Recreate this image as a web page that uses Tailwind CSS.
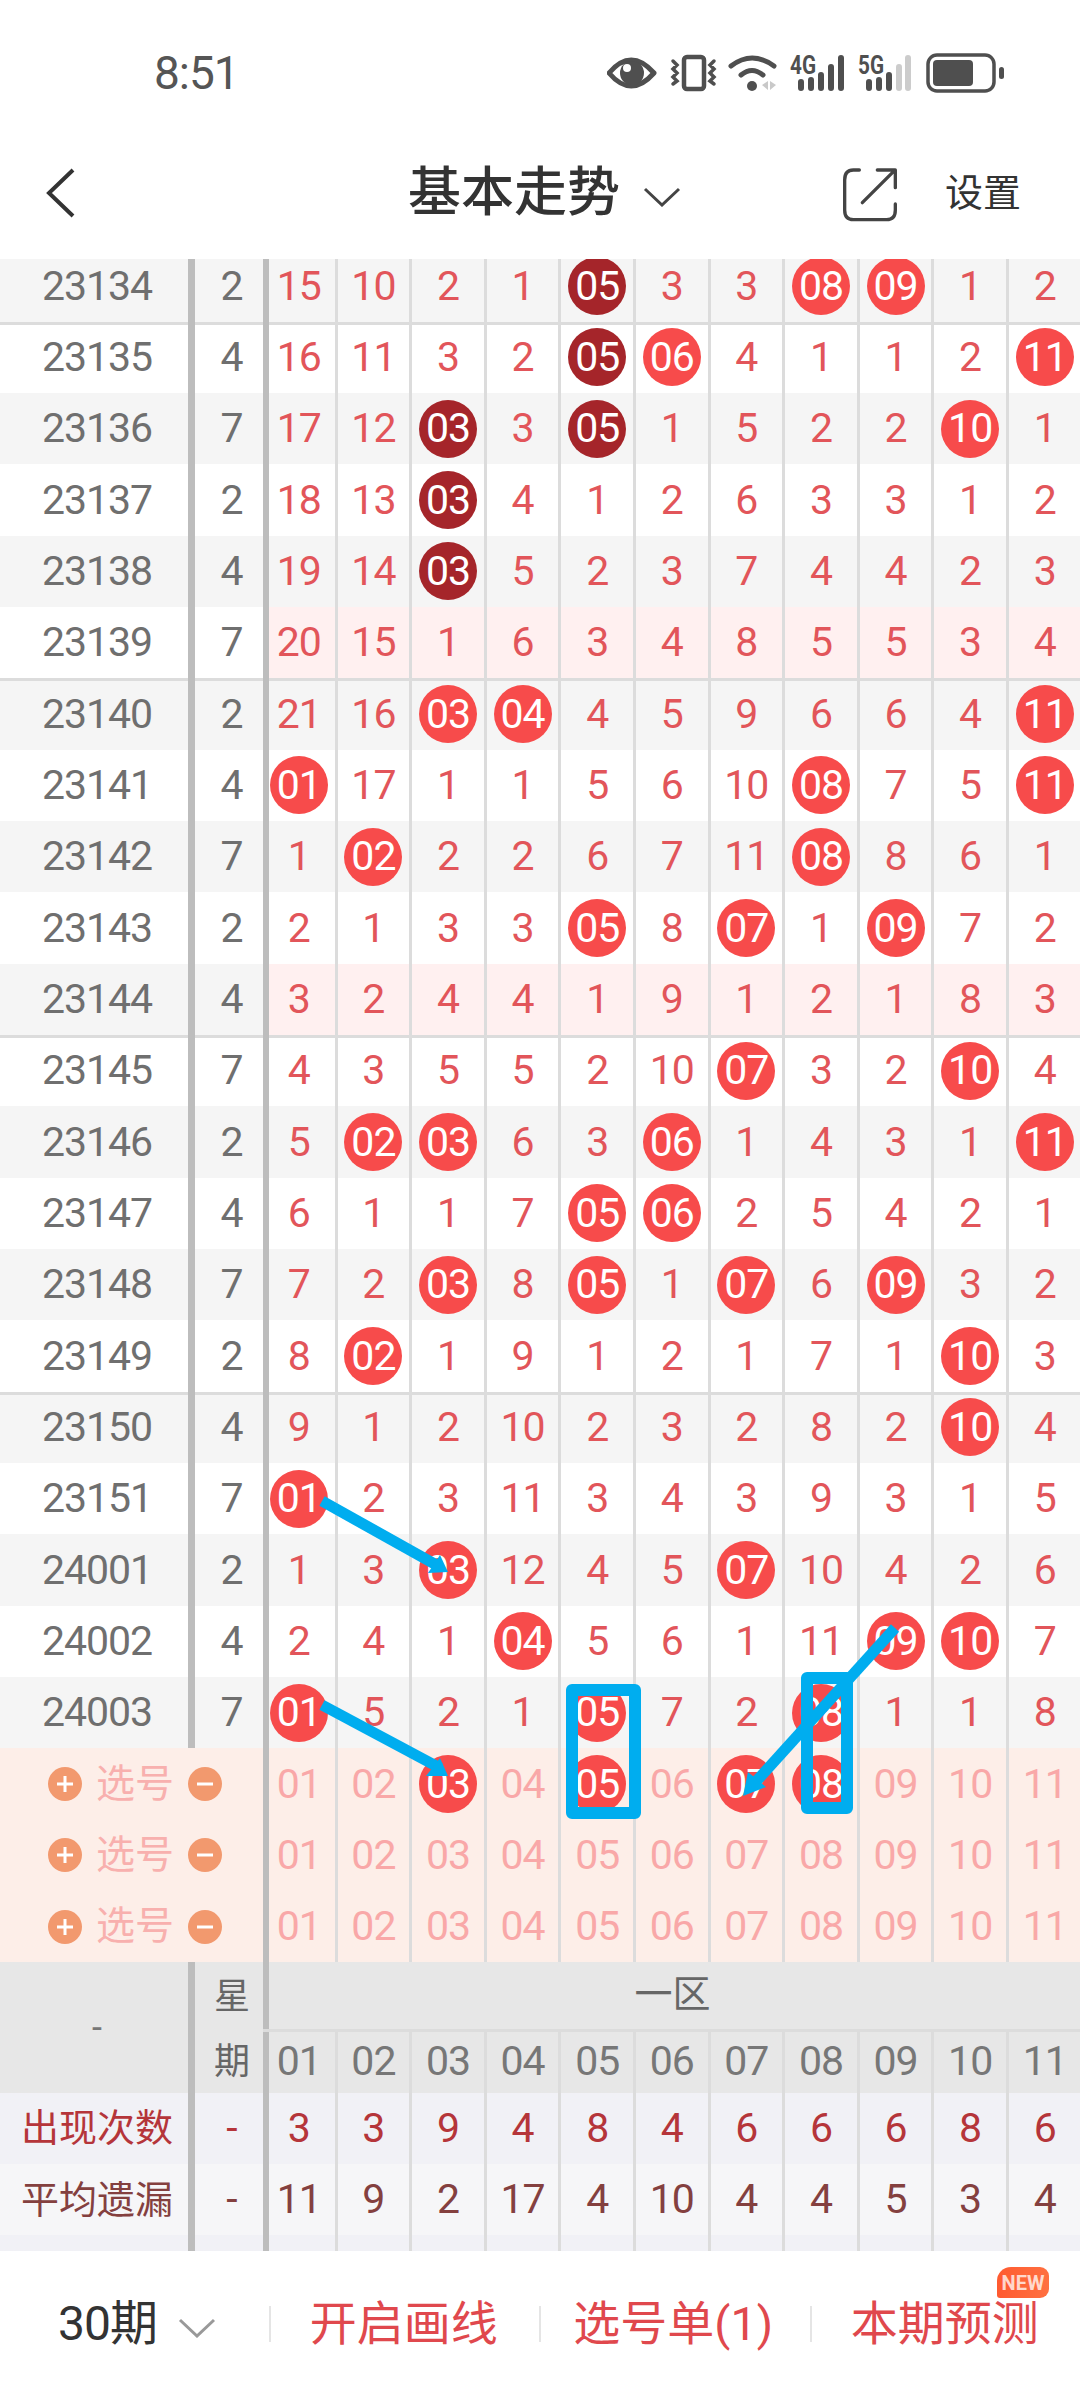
<!DOCTYPE html>
<html lang="zh-CN">
  <head>
    <meta charset="UTF-8" />
    <meta name="viewport" content="width=device-width, initial-scale=1.0" />
    <title>基本走势</title>
    <script src="https://cdn.jsdelivr.net/npm/@tailwindcss/browser@4"></script>
  </head>

  <body class="relative w-[1080px] h-[2400px] overflow-hidden bg-white font-[Roboto,'Noto_Sans_CJK_SC',sans-serif]">
    <!-- Status bar -->
    <div class="h-[110px] pt-[36px] flex items-center text-[#555555]">
      <span class="ml-[154px] text-[46px] leading-none tracking-[-1px]">8:51</span>
      <svg class="ml-[368px]" width="400" height="44" viewBox="609 51 400 44" fill="#4f4f4f">
        <!-- eye -->
        <path d="M611 73 Q633 47 656 73 Q633 99 611 73Z" fill="none" stroke="#4f4f4f" stroke-width="5" stroke-linejoin="round"/>
        <circle cx="634" cy="73" r="12"/>
        <circle cx="629" cy="68" r="4" fill="#fff"/>
        <!-- vibrate -->
        <rect x="686" y="57" width="20" height="32" rx="3" fill="none" stroke="#4f4f4f" stroke-width="4.5"/>
        <path d="M675 61l4 4-4 4 4 4-4 4 4 4-4 3M716 61l-4 4 4 4-4 4 4 4-4 4 4 3" fill="none" stroke="#4f4f4f" stroke-width="3.5" stroke-linecap="round"/>
        <!-- wifi -->
        <path d="M733 66 Q754 50 776 66M743 75 Q754 66 765 75" fill="none" stroke="#4f4f4f" stroke-width="5" stroke-linecap="round"/>
        <circle cx="754" cy="86" r="5"/>
        <path d="M770 81v9l-6-5zM772 81v9l6-5z" fill="#c9c9c9"/>
        <!-- 4G -->
        <text x="792" y="74" font-family="Roboto" font-weight="700" font-size="26" textLength="26" lengthAdjust="spacingAndGlyphs">4G</text>
        <path d="M803 82v6M813 80v8M823 75v13M833 67v21M843 58v30" stroke="#4f4f4f" stroke-width="6" stroke-linecap="round"/>
        <!-- 5G -->
        <text x="860" y="74" font-family="Roboto" font-weight="700" font-size="26" textLength="26" lengthAdjust="spacingAndGlyphs">5G</text>
        <path d="M871 82v6M881 80v8M891 75v13" stroke="#4f4f4f" stroke-width="6" stroke-linecap="round"/>
        <path d="M901 67v21M910 58v30" stroke="#cccccc" stroke-width="6" stroke-linecap="round"/>
        <!-- battery -->
        <rect x="930" y="55" width="66" height="36" rx="9" fill="none" stroke="#4f4f4f" stroke-width="3.5"/>
        <rect x="935" y="60" width="40" height="26" rx="4"/>
        <rect x="1001" y="67" width="5" height="12" rx="2.5"/>
      </svg>
    </div>

    <!-- Title bar -->
    <div class="h-[149px] pt-[17px] flex items-center text-[#333333]">
      <svg class="ml-[45px]" width="30" height="50" viewBox="0 0 30 50" fill="none" stroke="#333333" stroke-width="4">
        <path d="M28 2 L4 25 L28 48"/>
      </svg>
      <span class="ml-[333px] text-[53px] leading-none font-medium">基本走势</span>
      <svg class="ml-[23px] mt-[8px]" width="38" height="20" viewBox="0 0 38 20" fill="none" stroke="#444444" stroke-width="3">
        <path d="M2 2 L19 18 L36 2"/>
      </svg>
      <svg class="ml-[159px] mt-[3px]" width="60" height="60" viewBox="60 40 180 180" fill="none" stroke="#444444" stroke-width="10" stroke-linecap="round" stroke-linejoin="round">
        <path d="M118 55 H100 Q74 55 74 85 V175 Q74 204 100 204 H200 Q226 204 226 175 V157"/>
        <path d="M127 153 L224 56 M172 55 H226 V108"/>
      </svg>
      <span class="ml-[45px] text-[38px] leading-none">设置</span>
    </div>

    <!-- Trend table -->
    <main class="h-[1992px] overflow-hidden flex flex-col">
      <div id="rows" class="-mt-[8.5px] shrink-0"></div>

      <!-- Column header -->
      <div class="flex h-[130.4px] shrink-0 bg-[#e7e7e7] text-[#777777]">
        <div class="w-[195px] shrink-0 pl-[6px] border-r-[7px] border-[#bdbdbd] flex items-center justify-center text-[36px]">-</div>
        <div class="w-[68px] shrink-0 pl-[6px] pt-[17px] flex flex-col items-center gap-[29px] text-[36px] leading-none text-[#666666]">
          <span>星</span>
          <span>期</span>
        </div>
        <div class="flex-1 min-w-0 flex flex-col shadow-[inset_6px_0_0_#bdbdbd]">
          <div class="h-[70px] pb-[3px] pl-[2px] border-b-[3px] border-[#dcdcdc] flex items-center justify-center text-[38px] leading-none text-[#666666]">一区</div>
          <div id="headNums" class="flex-1 flex"></div>
        </div>
      </div>

      <div id="stats" class="shrink-0"></div>

      <!-- Table foot strip -->
      <div class="flex flex-1 bg-[#f1f1f6]">
        <div class="w-[195px] shrink-0 border-r-[7px] border-[#bdbdbd]"></div>
        <div class="w-[68px] shrink-0"></div>
        <div id="footCells" class="flex"></div>
      </div>
    </main>

    <!-- Bottom bar -->
    <div class="relative h-[149px] pb-[4px] flex items-center text-[47px] leading-none text-[#e0484d]">
      <div class="w-[269px] pl-[58px] flex items-center text-[#333333]">
        <span class="text-[48px] tracking-[-1px]">30期</span>
        <svg class="ml-[21px] mt-[8px]" width="38" height="20" viewBox="0 0 38 20" fill="none" stroke="#999999" stroke-width="3">
          <path d="M2 2 L19 18 L36 2"/>
        </svg>
      </div>
      <div class="w-[2px] h-[36px] bg-[#e5e5e5]"></div>
      <div class="w-[269px] pr-[2px] text-center">开启画线</div>
      <div class="w-[2px] h-[36px] bg-[#e5e5e5]"></div>
      <div class="w-[269px] pr-[4px] text-center">选号单(1)</div>
      <div class="w-[2px] h-[36px] bg-[#e5e5e5]"></div>
      <div class="w-[269px] pr-[2px] text-center">本期预测</div>
      <div class="absolute left-[997px] top-[16px] w-[52px] h-[31px] rounded-tl-[14px] rounded-tr-[9px] rounded-br-[9px] rounded-bl-[3px] bg-gradient-to-r from-[#ff5a30] to-[#ff7040] flex items-center justify-center text-[20px] font-bold text-white/75">NEW</div>
    </div>

    <!-- Hand-drawn marks on top of the chart -->
    <svg class="absolute left-0 top-0 pointer-events-none" width="1080" height="2400" viewBox="0 0 1080 2400" fill="none" stroke="#00adef">
      <g stroke-width="11">
        <path d="M322 1501 L440 1567"/>
        <path d="M322 1705 L440 1768"/>
        <path d="M895 1628 L752 1786"/>
      </g>
      <g stroke-width="12" stroke-linejoin="round">
        <rect x="572" y="1690" width="63" height="123"/>
        <rect x="807" y="1678" width="40" height="130"/>
      </g>
      <g fill="#00adef" stroke="none">
        <path d="M448 1572 L428 1573 L440 1555Z"/>
        <path d="M448 1776 L426 1776 L440 1758Z"/>
        <path d="M743 1796 L748 1772 L766 1787Z"/>
      </g>
    </svg>

    <script>
      var DATA = [
        ["23134", "2", "15 10 2 1 d05 3 3 r08 r09 1 2"],
        ["23135", "4", "16 11 3 2 d05 r06 4 1 1 2 r11"],
        ["23136", "7", "17 12 d03 3 d05 1 5 2 2 r10 1"],
        ["23137", "2", "18 13 d03 4 1 2 6 3 3 1 2"],
        ["23138", "4", "19 14 d03 5 2 3 7 4 4 2 3"],
        ["23139", "7", "20 15 1 6 3 4 8 5 5 3 4"],
        ["23140", "2", "21 16 r03 r04 4 5 9 6 6 4 r11"],
        ["23141", "4", "r01 17 1 1 5 6 10 r08 7 5 r11"],
        ["23142", "7", "1 r02 2 2 6 7 11 r08 8 6 1"],
        ["23143", "2", "2 1 3 3 r05 8 r07 1 r09 7 2"],
        ["23144", "4", "3 2 4 4 1 9 1 2 1 8 3"],
        ["23145", "7", "4 3 5 5 2 10 r07 3 2 r10 4"],
        ["23146", "2", "5 r02 r03 6 3 r06 1 4 3 1 r11"],
        ["23147", "4", "6 1 1 7 r05 r06 2 5 4 2 1"],
        ["23148", "7", "7 2 r03 8 r05 1 r07 6 r09 3 2"],
        ["23149", "2", "8 r02 1 9 1 2 1 7 1 r10 3"],
        ["23150", "4", "9 1 2 10 2 3 2 8 2 r10 4"],
        ["23151", "7", "r01 2 3 11 3 4 3 9 3 1 5"],
        ["24001", "2", "1 3 r03 12 4 5 r07 10 4 2 6"],
        ["24002", "4", "2 4 1 r04 5 6 1 11 r09 r10 7"],
        ["24003", "7", "r01 5 2 1 r05 7 2 r08 1 1 8"]
      ];

      var SEL = [
        "01 02 r03 04 r05 06 r07 r08 09 10 11",
        "01 02 03 04 05 06 07 08 09 10 11",
        "01 02 03 04 05 06 07 08 09 10 11"
      ];

      var PLAIN = "01 02 03 04 05 06 07 08 09 10 11";

      function numCell(i, inner, cls) {
        var first = i === 0 ? " shadow-[inset_6px_0_0_#bdbdbd]" : "";
        return '<div class="w-[74.6px] shrink-0 h-full border-r-[3px] border-[#dcdcdc] flex items-center justify-center ' + cls + first + '">' + inner + "</div>";
      }

      function ball(token) {
        var bg = token[0] === "d" ? "bg-[#a5252a]" : "bg-[#f74b4b]";
        return '<span class="w-[58px] h-[58px] rounded-full text-white flex items-center justify-center ' + bg + '">' + token.slice(1) + "</span>";
      }

      function numCells(line, textCls) {
        return line.split(" ").map(function (t, i) {
          var isBall = t[0] === "r" || t[0] === "d";
          return numCell(i, isBall ? ball(t) : t, textCls);
        }).join("");
      }

      var html = "";
      DATA.forEach(function (r, n) {
        var bg = n % 2 === 0 ? "bg-[#f5f5f5]" : "bg-white";
        var groupLine = n % 5 === 1 ? " shadow-[inset_0_3px_0_#dcdcdc]" : "";
        var pink = n % 5 === 0 && n > 0 && n < 15 ? "bg-[#fff0f0] " : "";
        html += '<div class="flex h-[71.34px] text-[41px] leading-none tracking-[-1px] ' + bg + groupLine + '">' +
          '<div class="w-[195px] shrink-0 pl-[6px] border-r-[7px] border-[#bdbdbd] flex items-center justify-center text-[#6f6f6f]">' + r[0] + "</div>" +
          '<div class="w-[68px] shrink-0 pl-[5px] flex items-center justify-center text-[#6f6f6f]">' + r[1] + "</div>" +
          numCells(r[2], pink + "text-[#e2555a]") + "</div>";
      });
      SEL.forEach(function (line) {
        html += '<div class="flex h-[71.34px] text-[41px] leading-none tracking-[-1px] bg-[#fdeee8]">' +
          '<div class="w-[263px] shrink-0 pl-[48px] flex items-center text-[39px] tracking-normal text-[#f8b0ae]">' +
          '<span class="w-[34px] h-[34px] rounded-full bg-[#f2996e] flex items-center justify-center"><svg width="20" height="20" viewBox="0 0 20 20" stroke="#fff" stroke-width="3"><path d="M10 2v16M2 10h16"/></svg></span>' +
          '<span class="mx-[14px]">选号</span>' +
          '<span class="w-[34px] h-[34px] rounded-full bg-[#f2996e] flex items-center justify-center"><svg width="20" height="20" viewBox="0 0 20 20" stroke="#fff" stroke-width="3"><path d="M2 10h16"/></svg></span>' +
          "</div>" + numCells(line, "text-[#f9a8a8]") + "</div>";
      });
      document.getElementById("rows").innerHTML = html;

      document.getElementById("headNums").innerHTML = PLAIN.split(" ").map(function (t, i) {
        return numCell(i, t, "text-[41px] leading-none tracking-[-1px] pb-[2px] text-[#777777]");
      }).join("");

      var STATS = [
        ["出现次数", "3 3 9 4 8 4 6 6 6 8 6", "bg-[#f1f1f6]", "text-[#b5353a]"],
        ["平均遗漏", "11 9 2 17 4 10 4 4 5 3 4", "bg-[#f6f6f8]", "text-[#84403f]"]
      ];
      document.getElementById("stats").innerHTML = STATS.map(function (s) {
        return '<div class="flex h-[71.34px] text-[41px] leading-none tracking-[-1px] ' + s[2] + " " + s[3] + '">' +
          '<div class="w-[195px] shrink-0 pl-[6px] border-r-[7px] border-[#bdbdbd] flex items-center justify-center text-[38px] tracking-normal">' + s[0] + "</div>" +
          '<div class="w-[68px] shrink-0 pl-[5px] flex items-center justify-center">-</div>' +
          numCells(s[1], "") + "</div>";
      }).join("");

      document.getElementById("footCells").innerHTML = PLAIN.split(" ").map(function (t, i) {
        return numCell(i, "", "");
      }).join("");
    </script>
  </body>
</html>
